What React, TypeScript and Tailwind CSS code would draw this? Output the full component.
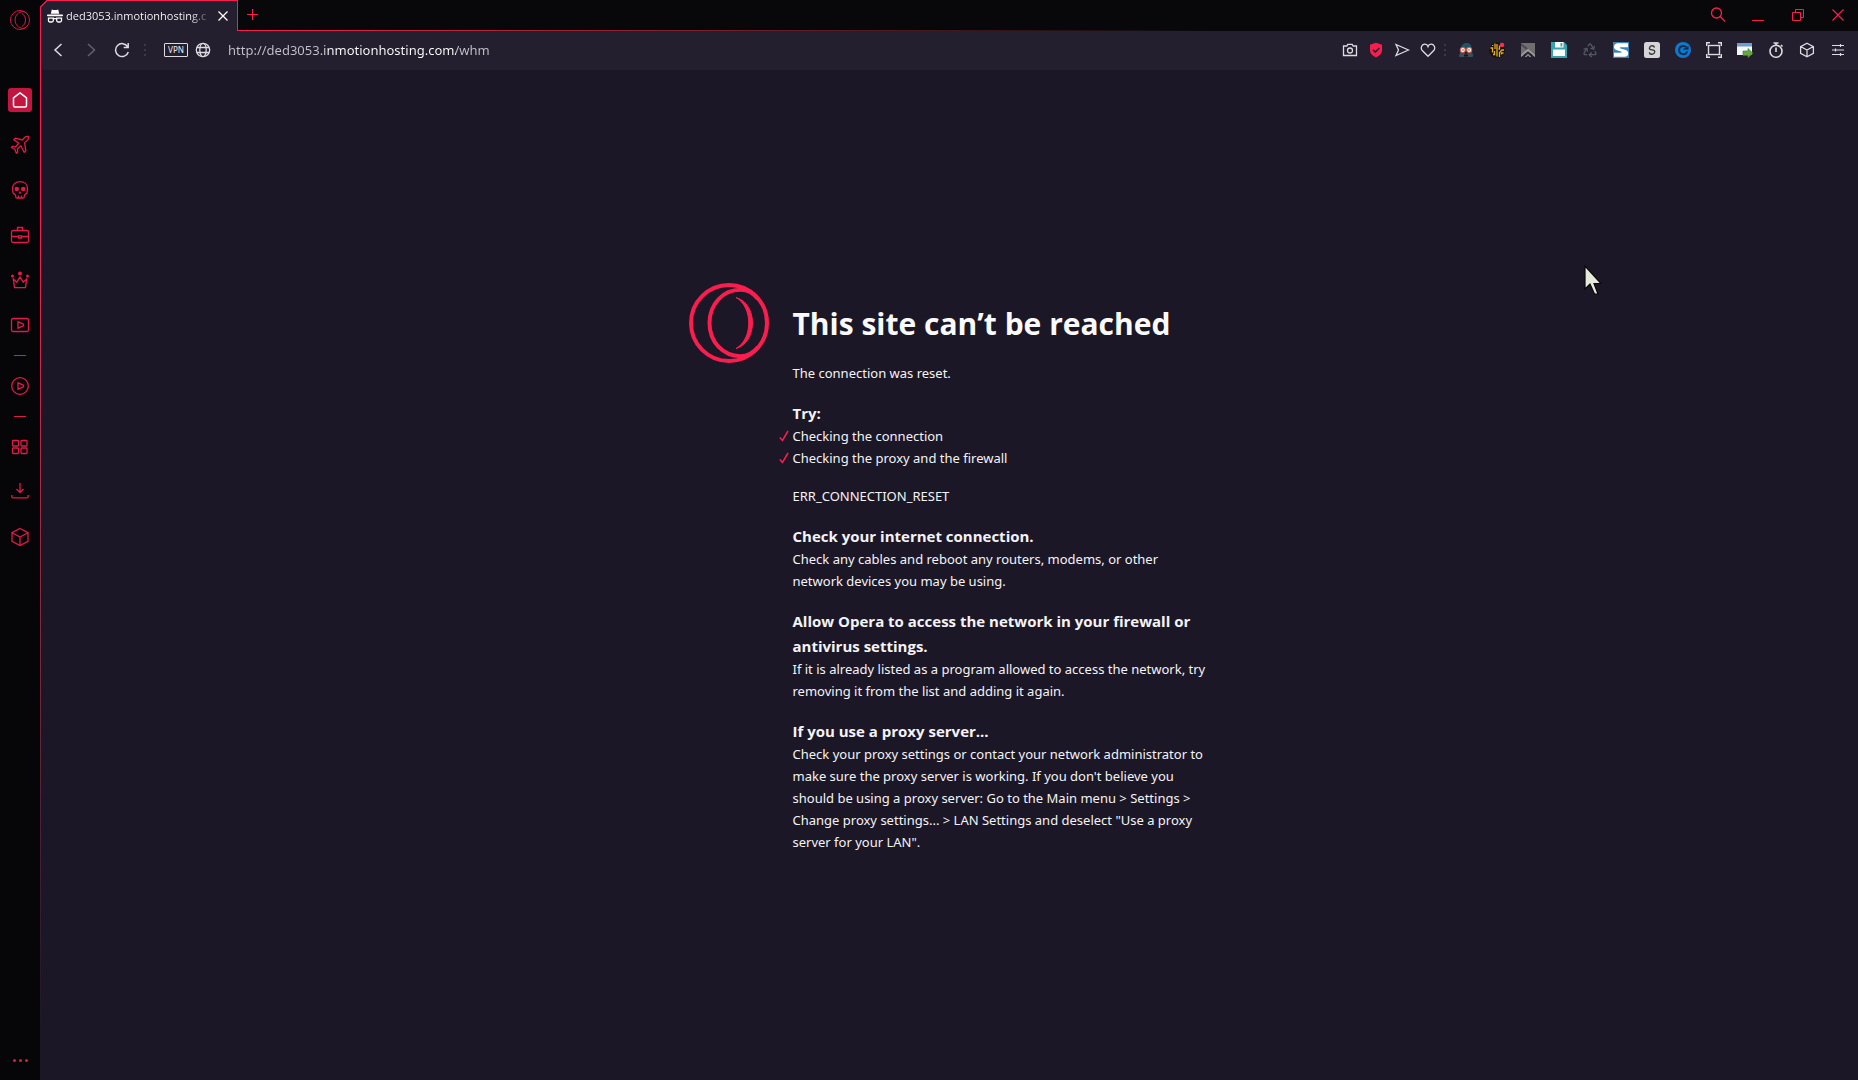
import React from "react";
import { Recycle } from "lucide-react";

type IconProps = { size?: number; children: React.ReactNode; box?: number; className?: string };

function Icon({ size = 20, box = 20, className = "", children }: IconProps) {
  return (
    <svg
      width={size}
      height={size}
      viewBox={`0 0 ${box} ${box}`}
      fill="none"
      stroke="currentColor"
      strokeWidth={1.3}
      aria-hidden="true"
      className={`shrink-0 ${className}`}
    >
      {children}
    </svg>
  );
}

function OperaLogo({ size, thin = false }: { size: number; thin?: boolean }) {
  return (
    <svg width={size} height={size} viewBox="0 0 80 80" fill="none" stroke={thin ? "#d61a45" : "#fa1e4e"} strokeWidth={4} aria-hidden="true" className="shrink-0">
      <circle cx="40" cy="40" r="38" />
      <path d="M69 16C64 9.500 58 6.800 51.500 6.800C34 6.800 20.500 21 20.500 40S34 73.200 51.500 73.200C58 73.200 64 70.500 69 64" />
      {thin ? (
        <path d="M47 14C67 23 67 57 47 66" />
      ) : (
        <path d="M47 14.500C69 20.500 69 59.500 47 65.500C64 56 64 24 47 14.500Z" fill="#fa1e4e" strokeWidth={1} />
      )}
    </svg>
  );
}

const play = "M8 6.800v6.400l5.500-2.400v-1.600z";
const cube = "M10 1.500l8 4.200v8.600l-8 4.200l-8-4.200V5.700zM2 5.700l8 4.300l8-4.300M10 10v8.500";

const workspaces = [
  {
    name: "Airplane workspace",
    icon: (
      <path
        strokeLinejoin="round"
        d="M18.500 1.500c-1.500-.4-2.800 0-3.800 1L12.200 5L5.500 3.200L3.800 4.600l5 3.600l-3.200 3.600l-3-.5l-1.200 1.200l3.300 1.800l1.700 4l1.300-1.300l-.3-3l3.500-3.200l3.200 6.500l1.700-1.600l-1.200-7.800l2.600-2.500c1-1 1.600-2.500 1.300-3.900z"
      />
    ),
  },
  {
    name: "Skull workspace",
    icon: (
      <>
        <path d="M10 1.600c-4.600 0-7.500 3-7.500 7c0 2 .5 3 .5 4.200c0 1.500 2.700 1.300 2.700 2.900v1c0 .8.500 1.300 1.300 1.300h6c.8 0 1.300-.5 1.300-1.300v-1c0-1.600 2.700-1.400 2.700-2.900c0-1.200.5-2.200.5-4.200c0-4-2.900-7-7.500-7zM8.500 15.500V18M11.500 15.500V18" />
        <circle cx="6.800" cy="9" r="2.200" fill="currentColor" stroke="none" />
        <circle cx="13.200" cy="9" r="2.200" fill="currentColor" stroke="none" />
        <path d="M10 11l1.700 2.600H8.300z" fill="currentColor" stroke="none" />
      </>
    ),
  },
  {
    name: "Briefcase workspace",
    icon: (
      <>
        <rect x="1.500" y="5.500" width="17" height="12" rx="1.500" />
        <path d="M7.500 5.500V2.500h5v3M1.500 11.500h7M11.500 11.500h7M8.500 10.800h3v2.200h-3z" />
      </>
    ),
  },
  {
    name: "Crown workspace",
    icon: (
      <>
        <path d="M3.300 9l1.200 8.700h11L16.700 9l-3.500 3.200L10 7l-3.200 5.200z" />
        <circle cx="10" cy="3.500" r="2" fill="currentColor" stroke="none" />
        <circle cx="2.500" cy="6" r="1.500" fill="currentColor" stroke="none" />
        <circle cx="17.500" cy="6" r="1.500" fill="currentColor" stroke="none" />
      </>
    ),
  },
  {
    name: "Video",
    icon: (
      <>
        <rect x="1.500" y="3.500" width="17" height="13" rx="1.500" />
        <path d={play} />
      </>
    ),
  },
];

const panels = [
  {
    name: "Speed Dial",
    icon: (
      <>
        <rect x="2.500" y="3.500" width="6" height="5.500" rx=".8" />
        <rect x="11" y="3.500" width="6" height="5.500" rx=".8" />
        <rect x="2.500" y="11" width="6" height="5.500" rx=".8" />
        <rect x="11" y="11" width="6" height="5.500" rx=".8" />
      </>
    ),
  },
  { name: "Downloads", icon: <path d="M10 1v9M6.500 7l3.500 3.500L13.500 7M1.800 13v1.500q0 1.300 1.300 1.300h13.800q1.300 0 1.300-1.300V13" /> },
  { name: "Extensions", icon: <path d={cube} /> },
];

function SideButton({ name, children }: { name: string; children: React.ReactNode }) {
  return (
    <button type="button" aria-label={name} className="flex h-[45px] w-full items-center justify-center text-[#e01b48]">
      {children}
    </button>
  );
}

function Divider() {
  return (
    <div className="flex h-4 items-center">
      <hr className="w-3 border-[#e01b48]" />
    </div>
  );
}

function Sidebar() {
  return (
    <nav aria-label="Sidebar" className="flex w-10 shrink-0 flex-col items-center bg-[#060608] pt-2.5">
      <button type="button" aria-label="Opera menu" className="mb-[47px] flex h-5 w-full items-center justify-center">
        <OperaLogo size={20} thin />
      </button>
      <SideButton name="Home">
        <span className="flex size-6 items-center justify-center rounded-[3px] bg-[#c0163f] text-white">
          <Icon size={18} box={18}>
            <path strokeWidth={1.500} strokeLinejoin="round" d="M9 1.800l6.500 5V14.500q0 1.500-1.500 1.500H4q-1.500 0-1.500-1.500V6.800z" />
          </Icon>
        </span>
      </SideButton>
      {workspaces.map((w) => (
        <SideButton key={w.name} name={w.name}>
          <Icon>{w.icon}</Icon>
        </SideButton>
      ))}
      <Divider />
      <SideButton name="Player">
        <Icon>
          <circle cx="10" cy="10" r="8.300" />
          <path d={play} />
        </Icon>
      </SideButton>
      <Divider />
      {panels.map((p) => (
        <SideButton key={p.name} name={p.name}>
          <Icon>{p.icon}</Icon>
        </SideButton>
      ))}
      <button type="button" aria-label="Sidebar setup" className="mt-auto flex h-10 w-full items-center justify-center gap-[3px]">
        <span className="size-[3px] rounded-full bg-[#e01b48]" />
        <span className="size-[3px] rounded-full bg-[#e01b48]" />
        <span className="size-[3px] rounded-full bg-[#e01b48]" />
      </button>
    </nav>
  );
}

function TabStrip() {
  return (
    <div className="flex h-[31px] items-stretch bg-[#08080a]">
      <div className="relative flex w-[197px] shrink-0 items-center gap-[3px] border-t border-r border-[#fa1e4e] bg-[#241f2f] pr-1.5 pl-1.5">
        <svg width="8" height="8" viewBox="0 0 8 8" className="absolute -top-px -left-px" aria-hidden="true">
          <path d="M0 0h7L0 7z" fill="#060608" />
          <path d="M0.500 7L7 0.500" stroke="#fa1e4e" strokeWidth="1.200" />
        </svg>
        <svg width="16" height="14" viewBox="0 0 16 14" fill="#fff" className="shrink-0" aria-hidden="true">
          <path d="M4.800 0.500q3.200 1 6.400 0l1 4.200H3.800z" />
          <rect x="0" y="5.500" width="16" height="1.700" rx=".8" />
          <path d="M1.500 9.200h4.800v2.300q0 1.500-1.500 1.500H3q-1.500 0-1.500-1.500zM9.700 9.200h4.800v2.300q0 1.500-1.500 1.500h-1.800q-1.500 0-1.500-1.500zM6.300 9.700h3.400" fill="none" stroke="#fff" strokeWidth="1.300" />
        </svg>
        <span className="min-w-0 flex-1 overflow-hidden bg-linear-to-r from-white from-85% to-transparent bg-clip-text text-[11px] font-medium whitespace-nowrap text-transparent">
          ded3053.inmotionhosting.c
        </span>
        <button type="button" aria-label="Close tab" className="flex size-4 shrink-0 items-center justify-center text-white">
          <Icon size={12} box={12}>
            <path d="M1.500 1.500l9 9M10.500 1.500l-9 9" />
          </Icon>
        </button>
      </div>
      <div className="flex min-w-0 flex-1 items-center justify-between bg-linear-to-r from-[#fa1e4e] to-[#08080a] to-60% pb-px">
        <div className="flex h-full w-full items-center justify-between bg-[#08080a] pr-3 pl-2">
          <button type="button" aria-label="New tab" className="flex size-3.5 items-center justify-center text-[#fa1e4e]">
            <Icon size={12} box={12}>
              <path strokeWidth={1} d="M5.500 0v11M0 5.500h11" />
            </Icon>
          </button>
          <div className="flex items-center gap-6 text-[#fa1e4e]">
            <button type="button" aria-label="Search tabs">
              <Icon size={16} box={16}>
                <circle cx="6.500" cy="6" r="5" />
                <path d="M10 9.500l5 5" />
              </Icon>
            </button>
            <button type="button" aria-label="Minimize">
              <Icon size={16} box={16}>
                <path strokeWidth={1} d="M2 13.500h12" />
              </Icon>
            </button>
            <button type="button" aria-label="Restore">
              <Icon size={16} box={16}>
                <path strokeWidth={1} d="M2.500 5.500h8v8h-8zM5.500 5.500v-3h8v8h-3" />
              </Icon>
            </button>
            <button type="button" aria-label="Close window">
              <Icon size={16} box={16}>
                <path strokeWidth={1.200} d="M2.500 2.500l11 11M13.500 2.500l-11 11" />
              </Icon>
            </button>
          </div>
        </div>
      </div>
    </div>
  );
}

function Dots() {
  return (
    <span className="flex flex-col gap-[3px]" aria-hidden="true">
      <span className="size-0.5 bg-[#3d384a]" />
      <span className="size-0.5 bg-[#3d384a]" />
      <span className="size-0.5 bg-[#3d384a]" />
    </span>
  );
}

const pageActions = [
  {
    name: "Snapshot",
    icon: (
      <>
        <path d="M1.500 4h3.300l1-1.700h4.400l1 1.700h3.300v9.500h-13z" />
        <circle cx="8" cy="8.500" r="2.500" />
      </>
    ),
  },
  {
    name: "Ad blocker",
    icon: (
      <>
        <path d="M8 .8l6 2v5.500c0 3.200-2.300 5.400-6 7.200c-3.700-1.800-6-4-6-7.200V2.800z" fill="#fa1e4e" stroke="none" />
        <path d="M5 7.800l2.300 2.300L11.300 6" stroke="#241f2f" strokeWidth={1.600} />
      </>
    ),
  },
  { name: "Send to My Flow", icon: <path d="M2 2.500L14.500 8L2 13.500L4.500 8z" /> },
  { name: "Add to bookmarks", icon: <path d="M8 14.300L2.500 8.800C-.3 5.500 2.300 2 5 2.200C6.600 2.300 7.600 3.400 8 4.500C8.400 3.400 9.400 2.300 11 2.200c2.700-.2 5.300 3.300 2.500 6.600z" /> },
];

const extensions = [
  {
    name: "User agent",
    icon: (
      <g stroke="none">
        <path d="M3 8C3 3 5 1 8.500 1S14 3 13.500 8l2 6H.8z" fill="#1d5566" />
        <path d="M4.500 9h7l.5 6H4z" fill="#211c29" />
        <circle cx="4.800" cy="8" r="3" fill="#e65f4a" />
        <circle cx="11.200" cy="8" r="3" fill="#e65f4a" />
        <circle cx="4.800" cy="8" r="1.900" fill="#fff" />
        <circle cx="11.200" cy="8" r="1.900" fill="#fff" />
        <circle cx="5" cy="8" r=".7" fill="#333" />
        <circle cx="11" cy="8" r=".7" fill="#333" />
        <path d="M1 15l2.500-4h3L8 12.300L9.500 11h3l2.500 4z" fill="#39505c" />
        <path d="M6 12.500h4v2H6z" fill="#17131f" />
      </g>
    ),
  },
  {
    name: "Circuit",
    icon: (
      <>
        <circle cx="8" cy="8.200" r="7.800" fill="#15120f" stroke="none" />
        <path d="M1.500 6h2v4.500M4 12.500h1.500V9M6 1.500v5.500M8 2v12.500M10.500 15v-4.500L13 8h2M10.500 3.500V7h-1M3.700 4V3M12.500 12.500v-1.500h2" stroke="#e9ae26" strokeWidth={1.300} />
        <circle cx="13" cy="3" r="2.300" fill="#f3344f" stroke="none" />
      </>
    ),
  },
  {
    name: "Page ribbon",
    icon: (
      <g stroke="none">
        <path d="M1 1h14v14L8 9l-7 6z" fill="#6f6f6f" />
        <path d="M1 1l14 11v3L1 3.500z" fill="#4c4a50" />
        <path d="M8 6.500L1 12.500V15l7-5.500l7 5.500v-2.500z" fill="#9a9a9a" />
        <path d="M8 9.500L3.500 13L5 15l3-3l3 3l1.500-2z" fill="#25202b" />
        <path d="M8 11.500L4.500 15h2L8 13.500L9.500 15h2z" fill="#8a8a8a" />
      </g>
    ),
  },
  {
    name: "Save page",
    icon: (
      <g stroke="none">
        <path d="M0 0h13l3 3v13H0z" fill="#36a3ab" />
        <path d="M4 0h8.500v5.500H4z" fill="#fff" />
        <path d="M9.500 1h1.800v3.500H9.500z" fill="#36a3ab" />
        <path d="M2 7.500h12V14H2z" fill="#fff" />
      </g>
    ),
  },
  { name: "Recycle", icon: null },
  {
    name: "Stylish",
    icon: (
      <g stroke="none">
        <path d="M0 0h16v16H0z" fill="#3d83b8" />
        <path d="M15 1.200v4H7.500q-1.500.6 0 1.200l4.500 1.300q3.200 1 3.200 3.500q0 3.600-4 3.600H1v-4h7q1.500-.6 0-1.200L4 8.300Q1 7.300 1 4.700Q1.200 1.200 5 1.200z" fill="#fff" />
      </g>
    ),
  },
  {
    name: "S tool",
    icon: (
      <>
        <rect width="16" height="16" rx="2.500" fill="#d5d5d5" stroke="none" />
        <path d="M10.500 5.500Q10 3.800 8 3.800T5.500 5.800T8 7.900T10.700 10T8 12.200T5.300 10.300" stroke="#333" strokeWidth={1.400} />
      </>
    ),
  },
  {
    name: "C tool",
    icon: (
      <>
        <circle cx="8" cy="8" r="8" fill="#0a7bd0" stroke="none" />
        <path d="M11.500 5.300Q10.200 4 8.300 4A4.100 4.100 0 1 0 12.200 9.300" stroke="#15294c" strokeWidth={1.900} />
        <path d="M8 7.300h5.200V4.500L11 6.300z" fill="#15294c" stroke="#15294c" strokeWidth={0.600} />
      </>
    ),
  },
  {
    name: "Screenshot frame",
    icon: (
      <>
        <path strokeWidth={1.400} d="M.7 4V.8H4M12 .8h3.300V4M15.300 12v3.200H12M4 15.200H.7V12" />
        <rect strokeWidth={1.400} x="2.500" y="3.500" width="11" height="9" />
      </>
    ),
  },
  {
    name: "Open in window",
    icon: (
      <g stroke="none">
        <path d="M0 1h15v12H0z" fill="#f4f8fb" />
        <path d="M0 1h15v3.500H0z" fill="#6d9bd6" />
        <path d="M6 9h5V6.500l5 4.700l-5 4.600V13.500H6z" fill="#64a843" stroke="#3b7a25" strokeWidth={0.600} />
      </g>
    ),
  },
  {
    name: "Timer",
    icon: (
      <>
        <circle cx="8" cy="9.200" r="6" strokeWidth={1.600} />
        <path d="M5.500 1h5M8 1v2.500M8 5.500V10M13 3l1.500 1.500" strokeWidth={1.600} />
      </>
    ),
  },
];

function Toolbar() {
  return (
    <div className="flex h-[39px] shrink-0 items-center bg-[#241f2f] pb-0.5 text-[#dcdbe0]">
      <div className="flex items-center gap-4 pl-[9px]">
        <button type="button" aria-label="Back">
          <Icon size={16} box={16}>
            <path strokeWidth={1.500} d="M11.500 2L5 8l6.500 6" />
          </Icon>
        </button>
        <button type="button" aria-label="Forward" className="text-[#65616d]">
          <Icon size={16} box={16}>
            <path strokeWidth={1.500} d="M6 2l6.500 6L6 14" />
          </Icon>
        </button>
        <button type="button" aria-label="Reload">
          <Icon size={16} box={16}>
            <path strokeWidth={1.500} d="M13.700 4.800A6.500 6.500 0 1 0 14.300 10M14.200 1v4.500H9.700" />
          </Icon>
        </button>
      </div>
      <div className="flex items-center pl-3.5">
        <Dots />
        <button type="button" className="ml-[18px] flex h-3.5 w-6 items-center justify-center rounded-[1px] border border-[#dcdbe0] font-['Noto_Sans',sans-serif] text-[8px] leading-none font-medium">
          VPN
        </button>
        <button type="button" aria-label="Site information" className="ml-[7px]">
          <Icon size={16} box={16}>
            <circle cx="8" cy="8" r="6.700" />
            <ellipse cx="8" cy="8" rx="3.200" ry="6.700" />
            <path d="M2 5.500h12M2 10.500h12" />
          </Icon>
        </button>
      </div>
      <input
        type="text"
        aria-label="Address"
        defaultValue="http://ded3053.inmotionhosting.com/whm"
        className="ml-[17px] h-7 min-w-0 flex-1 bg-[linear-gradient(90deg,#c4c2c8_97px,#fff_97px,#fff_228px,#c4c2c8_228px)] bg-clip-text font-['Segoe_UI','Noto_Sans',sans-serif] text-[13px] text-transparent outline-none"
      />
      <div className="flex items-center gap-2.5">
        {pageActions.map((a) => (
          <button key={a.name} type="button" aria-label={a.name}>
            <Icon size={16} box={16}>{a.icon}</Icon>
          </button>
        ))}
      </div>
      <div className="pr-3 pl-2">
        <Dots />
      </div>
      <div className="flex items-center gap-[15px] pr-3">
        {extensions.map((e) => (
          <button key={e.name} type="button" aria-label={e.name}>
            {e.icon ? <Icon size={16} box={16}>{e.icon}</Icon> : <Recycle size={16} strokeWidth={2} className="text-[#505860]" />}
          </button>
        ))}
        <button type="button" aria-label="Extensions menu">
          <Icon size={16} box={20}>
            <path strokeWidth={1.600} d={cube} />
          </Icon>
        </button>
        <button type="button" aria-label="Easy setup">
          <Icon size={16} box={16}>
            <path strokeWidth={1.200} d="M2 3.500h12M2 8h12M2 12.500h12M10.500 2v3M5.500 6.500v3M10.500 11v3" />
          </Icon>
        </button>
      </div>
    </div>
  );
}

const tips = [
  {
    title: ["Check your internet connection."],
    body: ["Check any cables and reboot any routers, modems, or other", "network devices you may be using."],
  },
  {
    title: ["Allow Opera to access the network in your firewall or", "antivirus settings."],
    body: ["If it is already listed as a program allowed to access the network, try", "removing it from the list and adding it again."],
  },
  {
    title: ["If you use a proxy server..."],
    body: [
      "Check your proxy settings or contact your network administrator to",
      "make sure the proxy server is working. If you don't believe you",
      "should be using a proxy server: Go to the Main menu > Settings >",
      "Change proxy settings... > LAN Settings and deselect \"Use a proxy",
      "server for your LAN\".",
    ],
  },
];

function Lines({ lines }: { lines: string[] }) {
  return (
    <>
      {lines.map((line) => (
        <span key={line} className="block whitespace-nowrap">
          {line}
        </span>
      ))}
    </>
  );
}

function SectionTitle({ children }: { children: React.ReactNode }) {
  return <h2 className="-mb-px font-['Segoe_UI','Open_Sans',sans-serif] text-[15px] leading-[25px] font-bold">{children}</h2>;
}

function ErrorPage() {
  return (
    <main className="flex min-h-0 flex-1 justify-center gap-6 bg-[#1c1726] pt-[213px] font-['Segoe_UI','Noto_Sans',sans-serif] text-[13px] leading-[22px] text-[#f4f3f6]">
      <OperaLogo size={80} />
      <div className="w-[418px]">
        <h1 className="mb-3.5 flex h-[65px] items-end font-['Segoe_UI','Open_Sans',sans-serif] text-[30px] leading-12 font-bold whitespace-nowrap text-[#fafafa]">
          This site can’t be reached
        </h1>
        <p>The connection was reset.</p>
        <div className="mt-[17px]">
          <SectionTitle>Try:</SectionTitle>
          <ul>
            {["Checking the connection", "Checking the proxy and the firewall"].map((t) => (
              <li key={t} className="relative">
                <svg width="10" height="12" viewBox="0 0 10 12" fill="none" className="absolute top-[5px] -left-3.5" aria-hidden="true">
                  <path d="M.8 7.500L3.500 10.500L9 1" stroke="#fa1e4e" strokeWidth="1.500" />
                </svg>
                {t}
              </li>
            ))}
          </ul>
        </div>
        <p className="mt-4">ERR_CONNECTION_RESET</p>
        {tips.map((tip) => (
          <section key={tip.title[0]} className="mt-[17px]">
            <SectionTitle>
              <Lines lines={tip.title} />
            </SectionTitle>
            <p>
              <Lines lines={tip.body} />
            </p>
          </section>
        ))}
      </div>
    </main>
  );
}

export default function App() {
  return (
    <div className="relative flex h-screen overflow-hidden bg-[#060608] font-['Segoe_UI','Open_Sans',sans-serif]">
      <Sidebar />
      <div className="w-px shrink-0 bg-linear-to-b from-[#fa1e4e] from-20% to-[#1c1726] to-95%" />
      <div className="flex min-w-0 flex-1 flex-col">
        <TabStrip />
        <Toolbar />
        <ErrorPage />
      </div>
      <svg width="18" height="31" viewBox="0 0 18 31" className="absolute top-[265px] left-[1584px]" aria-hidden="true">
        <path d="M1 1v23l5-5l4.500 10h3.500l-4-10.500h7z" fill="#e6eadb" stroke="#08080a" strokeWidth="1.200" />
      </svg>
    </div>
  );
}
